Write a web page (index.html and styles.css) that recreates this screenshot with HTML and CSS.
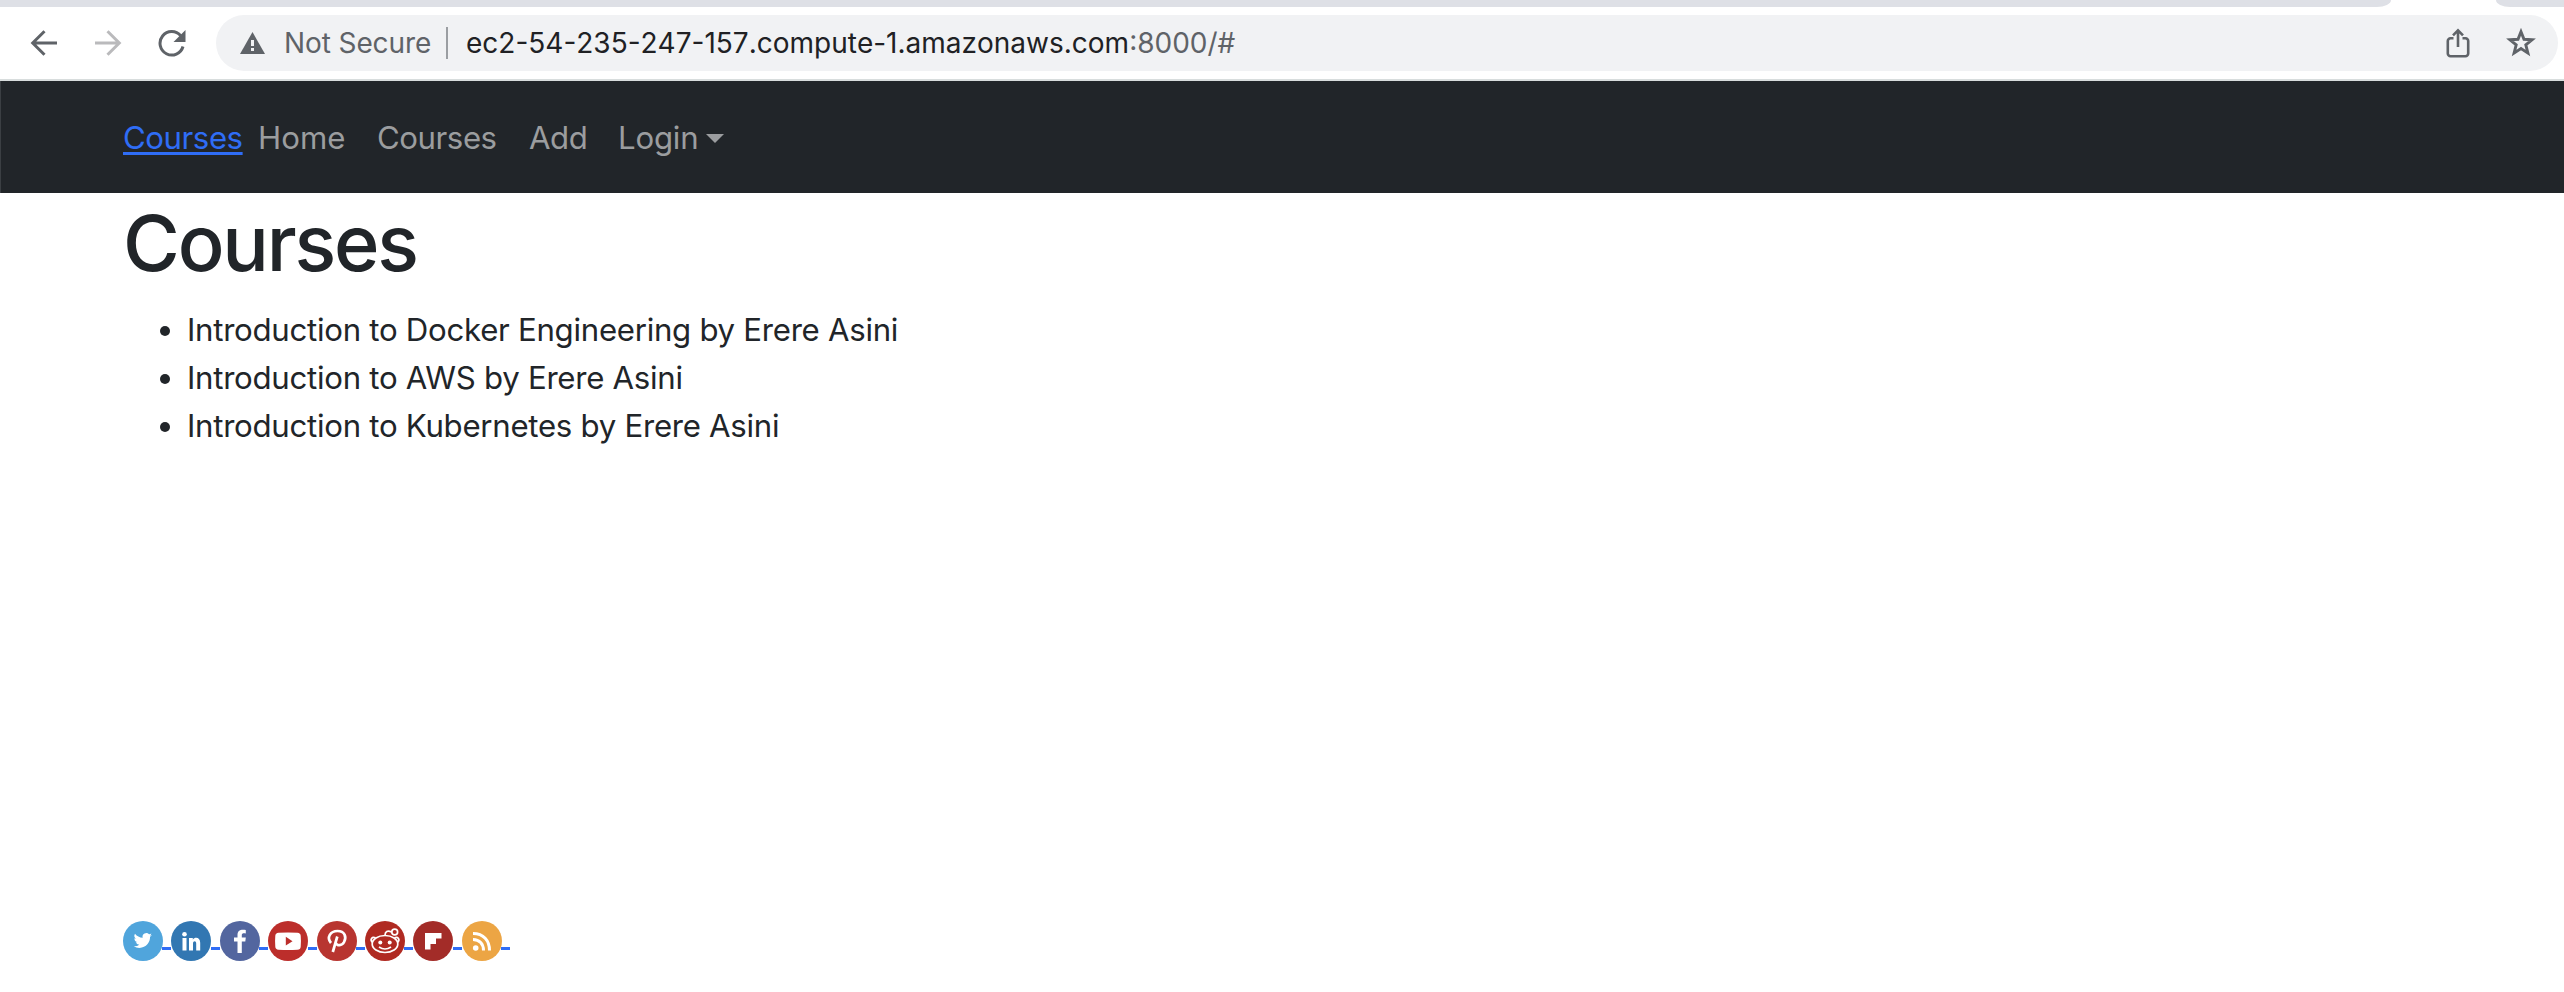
FILE: index.html
```html
<!DOCTYPE html>
<html lang="en">
<head>
<meta charset="utf-8">
<title>Courses</title>
<link rel="stylesheet" href="styles.css">
</head>
<body>
<header class="browser">
  <div class="tabs"><span class="tab-left"></span><span class="tab-right"></span></div>
  <div class="toolbar">
    <div class="controls">
      <svg class="ctl" width="28" height="28" viewBox="0 0 28 28" fill="none" stroke="#5f6368" stroke-width="3"><path d="M27 14H3M14.500 2.200L2.700 14l11.800 11.800"/></svg>
      <svg class="ctl" width="28" height="28" viewBox="0 0 28 28" fill="none" stroke="#bababc" stroke-width="3"><path d="M1 14h24M13.500 2.200L25.300 14 13.500 25.800"/></svg>
      <svg class="ctl" width="28" height="28" viewBox="0 0 28 28"><path d="M25 17.500A11.700 11.700 0 1 1 22.700 6.800" fill="none" stroke="#5f6368" stroke-width="3"/><path d="M27.500 1v12h-12z" fill="#5f6368"/></svg>
    </div>
    <div class="omnibox">
      <svg class="warn" width="25" height="22" viewBox="0 0 25 22"><path d="M12.500 0L25 22H0z" fill="#5f6368"/><path d="M11 8h3v6h-3zM11 16h3v3h-3z" fill="#f1f2f4"/></svg>
      <span class="insecure">Not Secure</span>
      <span class="divider"></span>
      <span class="url"><span class="host">ec2-54-235-247-157.compute-1.amazonaws.com</span><span class="port">:8000/#</span></span>
      <svg class="share" width="24" height="30" viewBox="0 0 24 30" fill="none" stroke="#5f6368" stroke-width="2.600"><path d="M7.500 10.300H4.500a2.700 2.700 0 0 0-2.700 2.700v12.500a2.700 2.700 0 0 0 2.700 2.700h15a2.700 2.700 0 0 0 2.700-2.700V13a2.700 2.700 0 0 0-2.700-2.700h-3M12 19V3M7 7.300l5-5 5 5"/></svg>
      <svg class="star" width="30" height="30" viewBox="0 0 30 30"><path d="M15 3.700l3 7.600 8.100.5-6.300 5.100 2.100 8.200-6.900-4.500-6.900 4.500 2.100-8.200-6.300-5.100 8.100-.5z" fill="none" stroke="#5f6368" stroke-width="2.900"/></svg>
    </div>
  </div>
</header>
<nav class="navbar">
  <a class="brand" href="#">Courses</a>
  <a class="link home" href="#">Home</a>
  <a class="link courses" href="#">Courses</a>
  <a class="link add" href="#">Add</a>
  <a class="link login" href="#">Login<span class="caret"></span></a>
</nav>
<main class="content">
  <h1 class="title">Courses</h1>
  <ul class="list">
    <li class="item">Introduction to Docker Engineering by Erere Asini</li>
    <li class="item">Introduction to AWS by Erere Asini</li>
    <li class="item">Introduction to Kubernetes by Erere Asini</li>
  </ul>
</main>
<footer class="social">
  <a class="s" href="#"><svg width="40" height="40" viewBox="0 0 40 40"><circle cx="20" cy="20" r="20" fill="#50a5dc"/><path transform="translate(10.700 10.400) scale(.76)" fill="#fff" d="M24 4.600a10 10 0 0 1-2.800.8 5 5 0 0 0 2.100-2.700 10 10 0 0 1-3.100 1.200 4.900 4.900 0 0 0-8.400 4.500A14 14 0 0 1 1.700 3.100a4.900 4.900 0 0 0 1.500 6.600 5 5 0 0 1-2.200-.6v.1a4.900 4.900 0 0 0 4 4.800 5 5 0 0 1-2.300.1 4.900 4.900 0 0 0 4.600 3.400A9.900 9.900 0 0 1 0 19.500a14 14 0 0 0 7.500 2.200c9.100 0 14.300-7.700 14-14.600A10 10 0 0 0 24 4.600z"/></svg></a>
  <a class="s" href="#"><svg width="40" height="40" viewBox="0 0 40 40"><circle cx="20" cy="20" r="20" fill="#3277b2"/><g fill="#fff"><circle cx="13.500" cy="13.300" r="2.300"/><path d="M11.500 17h4v12.500h-4zM18 17h3.800v1.700c2-3 7.400-2.600 7.400 3v7.800h-4v-7c0-3.300-3.200-2.900-3.200 0v7h-4z"/></g></svg></a>
  <a class="s" href="#"><svg width="40" height="40" viewBox="0 0 40 40"><circle cx="20" cy="20" r="20" fill="#53669f"/><path fill="#fff" d="M17.500 32V20.500H14v-4h3.500v-2.700c0-4 2.600-5.800 8.300-4.900v3.500c-3-.3-4 .1-4 2v2.100h4l-.5 4h-3.500V32z"/></svg></a>
  <a class="s" href="#"><svg width="40" height="40" viewBox="0 0 40 40"><circle cx="20" cy="20" r="20" fill="#bc2e2b"/><path d="M10.500 11.700q9.500-.6 19 0 3 .3 3.200 3 .5 5.500 0 11-.2 2.800-3.200 3-9.500.6-19 0-3-.3-3.200-3-.5-5.500 0-11 .2-2.700 3.200-3z" fill="#fff"/><path d="M17.800 15.800v8.800l6.700-4.400z" fill="#bc2e2b"/></svg></a>
  <a class="s" href="#"><svg width="40" height="40" viewBox="0 0 40 40"><circle cx="20" cy="20" r="20" fill="#b83530"/><path d="M14 22c-4.800-5.500-.5-12 6.500-12 7.300 0 9.300 5.800 6.600 11-2.300 4.300-7 3.800-8.100 1.200M20.300 15.500L15.800 31" fill="none" stroke="#fff" stroke-width="2.700"/></svg></a>
  <a class="s" href="#"><svg width="40" height="40" viewBox="0 0 40 40"><circle cx="20" cy="20" r="20" fill="#b02a22"/><g fill="none" stroke="#fff" stroke-width="1.700"><ellipse cx="20" cy="23" rx="12.800" ry="8.500"/><path d="M20 14.500c0-4 2.500-5.500 6.500-3.500M7.500 21.500c-3-3-.5-6.200 3-4.700M32.500 21.500c3-3 .5-6.200-3-4.700M14 26q6 4 12 0"/><circle cx="29.700" cy="11" r="2.900"/></g><circle cx="15.300" cy="21.500" r="2" fill="#fff"/><circle cx="24.700" cy="21.500" r="2" fill="#fff"/></svg></a>
  <a class="s" href="#"><svg width="40" height="40" viewBox="0 0 40 40"><circle cx="20" cy="20" r="20" fill="#a32c28"/><path fill="#fff" d="M12 12h16.500v5.600H23V23h-5.500v5.500H12z"/></svg></a>
  <a class="s" href="#"><svg width="40" height="40" viewBox="0 0 40 40"><circle cx="20" cy="20" r="20" fill="#eca544"/><circle cx="13.700" cy="27" r="2.800" fill="#fff"/><path d="M11 18.500c6.500 0 10.500 4.500 10.500 11M11 12.500c10.500 0 16.500 7 16.500 17" fill="none" stroke="#fff" stroke-width="3"/></svg></a>
</footer>
</body>
</html>
```
FILE: styles.css
```css
* { box-sizing: border-box; }
body { margin: 0; height: 992px; display: flex; flex-direction: column; background: #fff; font: 31.2px/48px Inter, "Liberation Sans", sans-serif; color: #212529; overflow: hidden; white-space: nowrap; }
svg { display: block; flex: none; }
.browser { flex: none; border-bottom: 2px solid #d8dddd; }
.tabs { height: 7px; display: flex; justify-content: space-between; }
.tab-left { width: 2391px; background: #dee0e6; border-bottom-right-radius: 14px 7px; }
.tab-right { width: 68px; background: #dee0e6; border-bottom-left-radius: 14px 7px; }
.toolbar { height: 72px; display: flex; align-items: center; padding: 0 6px 0 30px; }
.controls { width: 186px; display: flex; gap: 36px; flex: none; }
.omnibox { flex: 1; height: 56px; border-radius: 28px; background: #f1f2f4; display: flex; align-items: center; padding: 0 22px 0 24px; font-size: 28px; color: #5f6368; }
.insecure { margin-left: 19px; width: 162px; letter-spacing: -0.100px; }
.divider { width: 2px; height: 32px; background: #9b9ea2; }
.url { margin-left: 18px; flex: 1; }
.host { color: #202124; font-kerning: none; }
.share { margin-right: 36px; }
.navbar { flex: none; height: 112px; display: flex; align-items: center; padding: 2px 0 0 122px; background: #212529; border-left: 1px solid #3b3f43; color: #9b9d9f; }
.navbar a { flex: none; color: inherit; text-decoration: none; }
.navbar .brand { width: 135px; letter-spacing: -0.450px; color: #2f6df6; text-decoration: underline; text-decoration-thickness: 3px; text-underline-offset: 3px; text-decoration-skip-ink: none; }
.home { width: 119px; }
.courses { width: 152px; letter-spacing: -0.450px; }
.add { width: 89px; letter-spacing: -0.400px; }
.login { display: flex; align-items: center; letter-spacing: -0.200px; }
.caret { margin-left: 8px; border: 9px solid transparent; border-top-color: currentColor; border-bottom: 0; }
.content { padding: 1px 0 0 123px; }
.title { margin: 0 0 15px; padding-top: 1px; font-size: 77.500px; line-height: 96px; font-weight: 550; letter-spacing: -2.200px; }
.list { margin: 0; padding-left: 64px; letter-spacing: -0.280px; }
.social { margin-top: auto; padding: 0 0 31px 123px; display: flex; }
.s { width: 48.400px; height: 40px; background: linear-gradient(#2f6df6, #2f6df6) 100% 26px / 9px 3px no-repeat; }
```
